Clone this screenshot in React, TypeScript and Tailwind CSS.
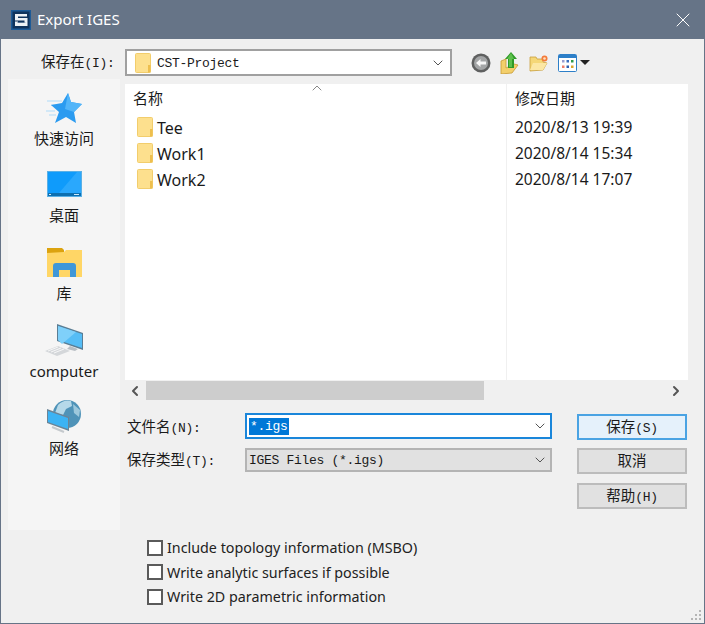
import React from 'react';
import { X, ChevronDown, ChevronUp, ChevronLeft, ChevronRight } from 'lucide-react';

const CJK = "font-['Noto_Sans','Noto_Sans_CJK_SC',sans-serif]";
const MONO = "font-['Liberation_Mono','Noto_Sans_CJK_SC',monospace]";

const SmallFolder = ({ className }: { className?: string }) => (
  <svg viewBox="0 0 16 20" className={className}>
    <rect x="0.5" y="0.5" width="15" height="19" rx="1" fill="#fde08e" stroke="#f2cd6c" />
    <rect x="13" y="12" width="2.5" height="7.5" fill="#eebf4e" />
  </svg>
);

// CJK part and the latin shortcut have different sizes in the native dialog
const Mixed = ({ cjk, latin }: { cjk: string; latin: string }) => (
  <span className={`block text-[14.5px] leading-[20px] ${CJK}`}>
    {cjk}
    <span className={`text-[13px] leading-none tracking-[-0.3px] ${MONO}`}>{latin}</span>
  </span>
);

const AppIcon = () => (
  <svg viewBox="0 0 20 20" className="w-5 h-5">
    <rect width="20" height="20" fill="#1d5a96" />
    <rect x="1.500" y="1.500" width="17" height="17" fill="#10335c" />
    <path d="M16 4H4v6.500h9.500V13H7v-1.500H4V16h12.500V8H7V6.500h9z" fill="#eef2f6" />
    <path d="M6 12.500h8.500" stroke="#8aa0b8" strokeWidth="0.6" />
  </svg>
);

const StarIcon = () => (
  <svg viewBox="0 0 38 32" className="w-[38px] h-8">
    <path d="M2 9h15M6 13h9M1 19h9M4 23h7" stroke="#c6e3f8" strokeWidth="1.500" />
    <path d="M23 1l3 9 11 2-8 8 2 11-10-6-11 6 4-11-8-7 11-2z" fill="#2b9bf0" />
    <path d="M23 1l3 9 11 2-8 8-9-3z" fill="#52b5f9" />
  </svg>
);

const DesktopIcon = () => (
  <svg viewBox="0 0 35 26" className="w-[35px] h-[26px]">
    <rect width="35" height="26" fill="#5ab0e6" />
    <rect x="1" y="1" width="33" height="21" fill="#0f9bfb" />
    <path d="M12 22L30 1h4v21z" fill="#2aa8fd" />
    <rect x="1" y="22" width="33" height="3" fill="#0d6fb0" />
    <rect x="2" y="23" width="2" height="1" fill="#cfeafa" />
    <rect x="27" y="23" width="5" height="1" fill="#cfeafa" />
  </svg>
);

const LibraryIcon = () => (
  <svg viewBox="0 0 35 30" className="w-[35px] h-[30px]">
    <path d="M0 1h15l2 2v3H0z" fill="#dca30f" />
    <path d="M0 6l17-1 2-2h16v27H0z" fill="#ffd666" />
    <path d="M6 30v-11q0-3 3-3h17q3 0 3 3v11h-6v-7h-11v7z" fill="#3f97d8" />
  </svg>
);

const ComputerIcon = () => (
  <svg viewBox="0 0 40 32" className="w-10 h-8">
    <path d="M13 0l26 9v17l-26-9z" fill="#5a7d94" />
    <path d="M14 2l24 8v14l-24-8z" fill="#55bdf6" />
    <path d="M14 2l18 6-14 12-4-4z" fill="#7fd0fa" />
    <path d="M26 22l8 3-3 2-8-2z" fill="#b8bec4" />
    <path d="M1 27l13-5 12 5-13 5z" fill="#d4d7da" />
    <path d="M4 27l10-4M7 28l10-4M10 29l10-4" stroke="#fff" strokeWidth="0.8" />
  </svg>
);

const NetworkIcon = () => (
  <svg viewBox="0 0 36 34" className="w-9 h-[34px]">
    <circle cx="21" cy="15" r="14" fill="#4f93b8" />
    <path d="M12 6q6-6 13-4l1 5-6 3-3 6-8-2z" fill="#b6d9e9" />
    <path d="M27 5l7 6-1 7-5-4z" fill="#9dc8dc" />
    <path d="M1 10l22 8v14L1 24z" fill="#6b8496" />
    <path d="M2 12l20 7v11L2 23z" fill="#3cb3f4" />
    <path d="M6 28l12 5" stroke="#c4c9cd" strokeWidth="2" />
  </svg>
);

const BackIcon = () => (
  <svg viewBox="0 0 20 20" className="w-5 h-5">
    <circle cx="10" cy="10" r="9.500" fill="#5f6060" />
    <circle cx="10" cy="10" r="7" fill="#a3a5a6" />
    <path d="M5 10l4.500-4v2.500H15v3H9.500V14z" fill="#f6f6f6" />
  </svg>
);

const UpIcon = () => (
  <svg viewBox="0 0 20 22" className="w-5 h-[22px]">
    <path d="M1 9l5-2v9l8-4 4 1-6 8-11 1z" fill="#f3cf6b" stroke="#c89b33" strokeWidth="0.8" />
    <path d="M11 0l6 7h-3v9H8V7H5z" fill="#2f9a28" />
    <path d="M11 1l3 6h-2v8H9V7H7z" fill="#5cc04b" />
  </svg>
);

const NewFolderIcon = () => (
  <svg viewBox="0 0 20 18" className="w-5 h-[18px]">
    <path d="M1 3h6l1 2h6v3l4 1-4 7-13 1z" fill="#f5d777" stroke="#c99f3c" strokeWidth="0.8" />
    <path d="M4 9h14l-4 7H1z" fill="#fce7a4" />
    <circle cx="15.500" cy="4.500" r="3" fill="#f47a3a" />
    <circle cx="15.500" cy="4.500" r="1.300" fill="#fde2c0" />
  </svg>
);

const ViewIcon = () => (
  <svg viewBox="0 0 19 18" className="w-[19px] h-[18px]">
    <rect x="0.500" y="0.500" width="18" height="17" rx="1" fill="#fff" stroke="#2d7fc8" />
    <rect x="1" y="1" width="17" height="3" fill="#2d7fc8" />
    <rect x="4" y="6" width="2.500" height="2.500" fill="#9a9ed0" />
    <rect x="8.500" y="6" width="2.500" height="2.500" fill="#3a6fbf" />
    <rect x="13" y="6" width="2.500" height="2.500" fill="#2f9a4a" />
    <rect x="4" y="11.500" width="2.500" height="2.500" fill="#ee7d6a" />
    <rect x="8.500" y="11.500" width="2.500" height="2.500" fill="#2f5fae" />
    <rect x="13" y="11.500" width="2.500" height="2.500" fill="#d9a52c" />
  </svg>
);

const places = [
  { label: '快速访问', icon: <StarIcon />, space: 'mt-0', gap: 'mt-[4px]' },
  { label: '桌面', icon: <DesktopIcon />, space: 'mt-[23px]', gap: 'mt-[8px]' },
  { label: '库', icon: <LibraryIcon />, space: 'mt-[22px]', gap: 'mt-[6px]' },
  { label: 'computer', icon: <ComputerIcon />, space: 'mt-[21px]', gap: 'mt-[5px]' },
  { label: '网络', icon: <NetworkIcon />, space: 'mt-[18px]', gap: 'mt-[5px]' },
];

const files = [
  { name: 'Tee', date: '2020/8/13 19:39' },
  { name: 'Work1', date: '2020/8/14 15:34' },
  { name: 'Work2', date: '2020/8/14 17:07' },
];

const options = [
  'Include topology information (MSBO)',
  'Write analytic surfaces if possible',
  'Write 2D parametric information',
];

export default function App() {
  return (
    <div className={`relative w-[705px] h-[624px] overflow-hidden bg-[#f0f0f0] border-x border-b border-[#667487] text-[#1a1a1a] ${CJK}`}>
      <div className="h-[39px] -mx-px bg-[#667487] flex items-center pl-[11px] pr-[10px] text-white">
        <AppIcon />
        <span className="ml-[6px] text-[15px] font-['Noto_Sans',sans-serif]">Export IGES</span>
        <X className="ml-auto w-6 h-6" strokeWidth={1} />
      </div>

      <div className="flex items-center mt-[10px] h-[27px]">
        <div className="ml-[40px] w-[84px] pb-[3px]"><Mixed cjk="保存在" latin="(I):" /></div>
        <div className="w-[327px] h-[27px] bg-white border-2 border-[#a0a0a0] flex items-center pl-[8px] pr-[4px]">
          <SmallFolder className="w-4 h-5" />
          <span className={`ml-[6px] mt-[2px] text-[13px] tracking-[-0.3px] ${MONO}`}>CST-Project</span>
          <ChevronDown className="ml-auto w-[16px] h-[16px] text-[#555]" strokeWidth={1.5} />
        </div>
        <div className="flex items-center ml-[19px]">
          <BackIcon />
          <div className="ml-[9px]"><UpIcon /></div>
          <div className="ml-[9px]"><NewFolderIcon /></div>
          <div className="ml-[9px]"><ViewIcon /></div>
          <div className="ml-[3px] w-0 h-0 border-x-[5px] border-x-transparent border-t-[5px] border-t-[#222]" />
        </div>
      </div>

      <div className="flex mt-[3px]">
        <div className="ml-[7px] w-[112px] h-[451px] bg-[#f5f5f5] flex flex-col pt-[13px]">
          {places.map((p) => (
            <div key={p.label} className={`${p.space} flex flex-col items-center`}>
              {p.icon}
              <span className={`${p.gap} text-[15px] leading-[20px]`}>{p.label}</span>
            </div>
          ))}
        </div>

        <div className="ml-[5px] w-[563px] mt-[5px]">
          <div className="relative h-[296px] bg-white flex">
            <div className="w-[382px] border-r border-[#f0f0f0]">
              <div className="pl-[8px] pt-[3px] h-[30px] text-[15px] leading-[22px]">名称</div>
              <ChevronUp className="absolute left-[184px] -top-[4px] w-[16px] h-[16px] text-[#888]" strokeWidth={1.5} />
              {files.map((f) => (
                <div key={f.name} className="flex items-center h-[26px] pl-[12px]">
                  <SmallFolder className="w-4 h-5" />
                  <span className="ml-[4px] mt-px text-[16px]">{f.name}</span>
                </div>
              ))}
            </div>
            <div className="pl-[8px] flex-1">
              <div className="pt-[3px] h-[30px] text-[15px] leading-[22px]">修改日期</div>
              {files.map((f) => (
                <div key={f.name} className="flex items-center h-[26px] pt-[2px] text-[15.5px]">{f.date}</div>
              ))}
            </div>
          </div>

          <div className="mt-px h-[19px] flex items-center">
            <ChevronLeft className="w-[20px] h-[16px] text-[#555]" strokeWidth={3} />
            <div className="ml-px w-[338px] h-[19px] bg-[#cdcdcd]" />
            <ChevronRight className="ml-auto mr-[2px] w-[20px] h-[16px] text-[#555]" strokeWidth={3} />
          </div>

          <div className="flex mt-[13px]">
            <div className="w-[120px] pt-[3px]">
              <div className="ml-[2px] h-[33px]"><Mixed cjk="文件名" latin="(N):" /></div>
              <div className="ml-[2px]"><Mixed cjk="保存类型" latin="(T):" /></div>
            </div>
            <div className="w-[307px]">
              <div className="h-[26px] bg-white border-2 border-[#1a86da] flex items-center pl-[2px] pr-[2px]">
                <span className={`bg-[#0078d7] text-white text-[13px] tracking-[-0.3px] leading-[17px] px-px ${MONO}`}>*.igs</span>
                <ChevronDown className="ml-auto w-[16px] h-[16px] text-[#555]" strokeWidth={1.5} />
              </div>
              <div className="mt-[9px] h-[24px] bg-[#e1e1e1] border-2 border-[#b4b4b4] flex items-center pl-[2px] pr-[2px]">
                <span className={`mt-[2px] text-[13px] tracking-[-0.3px] ${MONO}`}>IGES Files (*.igs)</span>
                <ChevronDown className="ml-auto w-[16px] h-[16px] text-[#555]" strokeWidth={1.5} />
              </div>
            </div>
            <div className="ml-[25px] w-[110px] mt-px flex flex-col">
              <button className="h-[26px] pb-[3px] bg-[#e5f1fb] border-2 border-[#4aa3e3]"><Mixed cjk="保存" latin="(S)" /></button>
              <button className="mt-[8px] h-[26px] pb-[3px] bg-[#e1e1e1] border-2 border-[#bcbcbc]"><Mixed cjk="取消" latin="" /></button>
              <button className="mt-[9px] h-[26px] pb-[3px] bg-[#e1e1e1] border-2 border-[#bcbcbc]"><Mixed cjk="帮助" latin="(H)" /></button>
            </div>
          </div>
        </div>
      </div>

      <div className="ml-[146px] mt-[5.5px] flex flex-col">
        {options.map((o) => (
          <label key={o} className="flex items-center h-[24.5px]">
            <span className="w-[16px] h-[16px] bg-white border-2 border-[#5a5a5a] box-border" />
            <span className="ml-[4px] text-[14.3px] text-[#222] font-['Noto_Sans',sans-serif]">{o}</span>
          </label>
        ))}
      </div>

      <svg viewBox="0 0 12 12" className="absolute right-[2px] bottom-[2px] w-3 h-3">
        <path d="M9 1h2v2H9zM5 5h2v2H5zM9 5h2v2H9zM1 9h2v2H1zM5 9h2v2H5zM9 9h2v2H9z" fill="#b5b5b5" />
      </svg>
    </div>
  );
}
